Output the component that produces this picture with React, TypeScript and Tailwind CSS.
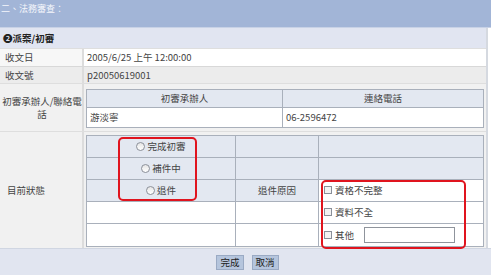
import React from 'react';

const font = { fontFamily: '"Noto Sans CJK TC", "Liberation Sans", sans-serif' };

function Radio({ label }: { label: string }) {
  return (
    <span className="inline-flex items-center gap-[2px]">
      <span className="w-[9px] h-[9px] rounded-full border border-[#8a8f99] bg-gradient-to-b from-[#e6e6e6] to-white" />
      <span>{label}</span>
    </span>
  );
}

function Check({ label }: { label: string }) {
  return (
    <span className="inline-flex items-center gap-[3px]">
      <span className="w-[8px] h-[8px] border border-[#8a8f99] bg-[#f3f3f3]" />
      <span>{label}</span>
    </span>
  );
}

export default function App() {
  const cell = 'border border-[#a9b0bb]';
  return (
    <div className="w-[491px] h-[275px] bg-white text-[9.5px] text-[#444] overflow-hidden" style={font}>
      {/* header */}
      <div className="h-[27px] bg-[#a2b5d7] text-[#f4f6fb] px-[1px] pt-[2px] leading-[14px] text-[9px]">二、法務審查：</div>
      <div className="h-[1px] bg-[#c8d2e6]" />
      <div className="w-[488px] border-r-2 border-[#d5d9e0]">
        <div className="h-[20px] bg-[#e1e5f1] flex items-center px-[3px] font-bold text-[#222]">❷派案/初審</div>

        {/* 收文日 */}
        <div className="flex h-[18px] border-t border-[#dedede]">
          <div className="w-[84px] bg-[#f7f7f7] px-[5px] flex items-center border-r-2 border-[#dcdcdc]">收文日</div>
          <div className="flex-1 bg-white px-[3px] flex items-center">2005/6/25 上午 12:00:00</div>
        </div>

        {/* 收文號 */}
        <div className="flex h-[17px] bg-[#ececec] border-t border-[#d8d8d8]">
          <div className="w-[84px] px-[5px] flex items-center border-r-2 border-[#dcdcdc]">收文號</div>
          <div className="flex-1 px-[3px] flex items-center">p20050619001</div>
        </div>

        {/* 初審承辦人 */}
        <div className="flex h-[48px] bg-[#f1f1f1] border-t border-[#dedede]">
          <div className="w-[84px] pl-[2px] flex flex-col items-center justify-center text-center leading-[13px] whitespace-nowrap border-r-2 border-[#dcdcdc]">
            <span>初審承辦人/聯絡電</span>
            <span>話</span>
          </div>
          <div className="flex-1 pl-[2px] pr-[1px] pt-[5px]">
            <table className="w-[398px] border-collapse">
              <tbody>
                <tr className="h-[18px] bg-[#e3e8f1]">
                  <td className={`${cell} w-[196px] text-center`}>初審承辦人</td>
                  <td className={`${cell} text-center`}>連絡電話</td>
                </tr>
                <tr className="h-[20px] bg-white">
                  <td className={`${cell} px-[3px]`}>游淡寧</td>
                  <td className={`${cell} px-[3px]`}>06-2596472</td>
                </tr>
              </tbody>
            </table>
          </div>
        </div>

        {/* 目前狀態 */}
        <div className="flex h-[117px] bg-[#f1f1f1] border-t border-[#dedede]">
          <div className="w-[84px] px-[7px] flex items-center border-r-2 border-[#dcdcdc]">目前狀態</div>
          <div className="flex-1 pl-[2px] pr-[1px] pt-[3px]">
            <div className="relative w-[398px]">
              <table className="w-[398px] border-collapse">
                <tbody>
                  <tr className="h-[22px] bg-[#e3e8f1]">
                    <td className={`${cell} w-[149px] text-center`}><Radio label="完成初審" /></td>
                    <td className={`${cell} w-[83px]`} />
                    <td className={cell} />
                  </tr>
                  <tr className="h-[22px] bg-[#e3e8f1]">
                    <td className={`${cell} text-center`}><Radio label="補件中" /></td>
                    <td className={cell} />
                    <td className={cell} />
                  </tr>
                  <tr className="h-[22px] bg-[#e3e8f1]">
                    <td className={`${cell} text-center`}><Radio label="退件" /></td>
                    <td className={`${cell} text-center`}>退件原因</td>
                    <td className={`${cell} bg-white px-[5px]`}><Check label="資格不完整" /></td>
                  </tr>
                  <tr className="h-[22px] bg-white">
                    <td className={cell} />
                    <td className={cell} />
                    <td className={`${cell} px-[5px]`}><Check label="資料不全" /></td>
                  </tr>
                  <tr className="h-[23px] bg-white">
                    <td className={cell} />
                    <td className={cell} />
                    <td className={`${cell} px-[5px]`}>
                      <div className="flex items-center">
                        <Check label="其他" />
                        <span className="ml-[10px] w-[91px] h-[16px] border border-[#8f949c] bg-white" />
                      </div>
                    </td>
                  </tr>
                </tbody>
              </table>
              <div className="absolute left-[32px] top-[2px] w-[79px] h-[64px] border-2 border-[#e0141e] rounded-[5px]" />
              <div className="absolute left-[235px] top-[45px] w-[145px] h-[69px] border-2 border-[#e0141e] rounded-[5px]" />
            </div>
          </div>
        </div>
      </div>

      {/* footer */}
      <div className="h-[27px] bg-[#e1e5f0] border-t border-[#d0d6e2] flex items-center justify-center gap-[8px] pl-[4px]">
        <button className="px-[3px] h-[15px] leading-[13px] bg-[#b5c5dd] border border-[#9aaac4] text-[#222]">完成</button>
        <button className="px-[3px] h-[15px] leading-[13px] bg-[#b5c5dd] border border-[#9aaac4] text-[#222]">取消</button>
      </div>
    </div>
  );
}
